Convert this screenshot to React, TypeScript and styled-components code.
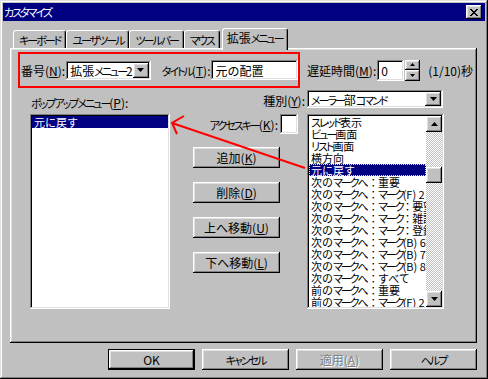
import styled, { createGlobalStyle, css } from "styled-components";

const GlobalStyle = createGlobalStyle`
  html, body {
    margin: 0;
    padding: 0;
    background: #c0c0c0;
  }
  body {
    font-family: "Noto Sans CJK JP", "Noto Sans", sans-serif;
    font-size: 12px;
    color: #000;
  }
  * {
    box-sizing: border-box;
  }
`;

const raised = css`
  box-shadow:
    inset -1px -1px #000,
    inset 1px 1px #fff,
    inset -2px -2px #808080,
    inset 2px 2px #dfdfdf;
`;

const sunken = css`
  box-shadow:
    inset -1px -1px #fff,
    inset 1px 1px #808080,
    inset -2px -2px #dfdfdf,
    inset 2px 2px #000;
`;

// katakana in the old UI font is set much narrower than kanji
const SKana = styled.span`
  font-size: 11px;
  font-feature-settings: "palt" 1;
  letter-spacing: -2px;
`;

const SColon = styled.span`
  font-feature-settings: "palt" 1;
  padding: 0 2px;
`;

function J({ t }: { t: string }) {
  const parts = t.split(/([\u30A0-\u30FF]+|：)/);
  return (
    <>
      {parts.map((p, i) =>
        i % 2 === 0 ? (
          p
        ) : p === "：" ? (
          <SColon key={i}>{p}</SColon>
        ) : (
          <SKana key={i}>{p}</SKana>
        )
      )}
    </>
  );
}

const SWindow = styled.div`
  position: relative;
  width: 488px;
  height: 379px;
  padding: 3px;
  background: #c0c0c0;
  display: flex;
  flex-direction: column;
  box-shadow:
    inset -1px -1px #000,
    inset 1px 1px #dfdfdf,
    inset -2px -2px #808080,
    inset 2px 2px #fff;
`;

const STitleBar = styled.div`
  height: 18px;
  flex: 0 0 18px;
  background: #000080;
  color: #fff;
  display: flex;
  align-items: center;
  justify-content: space-between;
  padding: 0 3px 0 1px;
  line-height: 1;
`;

const SCloseButton = styled.div`
  width: 16px;
  height: 14px;
  background: #c0c0c0;
  display: grid;
  place-items: center;
  ${raised};
`;

const SBody = styled.div`
  flex: 1;
  display: flex;
  flex-direction: column;
  padding: 7px 8px 0 7px;
`;

const STabStrip = styled.div`
  display: flex;
  align-items: flex-end;
  height: 20px;
  padding-left: 3px;
  position: relative;
  z-index: 1;
`;

const STab = styled.div<{ $active?: boolean }>`
  height: 18px;
  padding: 1px 5px 0;
  display: flex;
  align-items: center;
  white-space: nowrap;
  background: #c0c0c0;
  border-top: 1px solid #fff;
  border-left: 1px solid #fff;
  border-right: 1px solid #000;
  border-radius: 3px 3px 0 0;
  box-shadow: inset -1px 0 #808080;

  ${(p) =>
    p.$active &&
    css`
      height: 22px;
      margin: 0 -2px -2px 2px;
      padding: 0 4px 4px;
      position: relative;
      z-index: 2;
    `}
`;

const SPanel = styled.div`
  flex: 0 0 295px;
  background: #c0c0c0;
  padding: 4px 2px 2px;
  ${raised};
`;

const STopRow = styled.div`
  display: flex;
  align-items: center;
  padding-left: 6px;
`;

const SRedBox = styled.div`
  width: 282px;
  height: 36px;
  border: 2px solid #ff0000;
  display: flex;
  align-items: center;
`;

const SLabel = styled.span<{ $gap?: number }>`
  white-space: nowrap;
  margin-left: ${(p) => p.$gap ?? 0}px;
`;

const SField = styled.div<{ $w: number; $h: number; $gap?: number }>`
  width: ${(p) => p.$w}px;
  height: ${(p) => p.$h}px;
  margin-left: ${(p) => p.$gap ?? 0}px;
  background: #fff;
  padding: 2px 2px 2px 4px;
  display: flex;
  align-items: center;
  white-space: nowrap;
  overflow: hidden;
  ${sunken};
`;

const SFieldText = styled.span`
  flex: 1;
  overflow: hidden;
`;

const SArrowButton = styled.div<{ $h?: number }>`
  width: 16px;
  height: ${(p) => p.$h ?? 15}px;
  flex: 0 0 auto;
  background: #c0c0c0;
  display: grid;
  place-items: center;
  ${raised};
`;

const SSpinner = styled.div`
  width: 15px;
  height: 21px;
  margin-left: 1px;
  display: flex;
  flex-direction: column;
`;

const SSpinButton = styled.div`
  flex: 1;
  background: #c0c0c0;
  display: grid;
  place-items: center;
  ${raised};
`;

const SGrid = styled.div`
  display: grid;
  grid-template-columns: 140px 137px 137px;
  grid-template-rows: 21px 195px;
  row-gap: 3px;
  margin: 2px 0 0 18px;
`;

const SPopupLabel = styled.span`
  align-self: end;
  padding-left: 1px;
  white-space: nowrap;
`;

const SKindLabel = styled.span`
  justify-self: end;
  align-self: center;
  padding-right: 2px;
  white-space: nowrap;
`;

const SListBox = styled.div`
  background: #fff;
  padding: 2px;
  display: flex;
  overflow: hidden;
  ${sunken};
`;

const SItems = styled.div`
  flex: 1;
  min-width: 0;
  overflow: hidden;
`;

const SItem = styled.div<{ $selected?: boolean; $focused?: boolean }>`
  height: 12px;
  line-height: 12px;
  padding-left: 2px;
  font-size: 11px;
  white-space: nowrap;

  ${(p) =>
    p.$selected &&
    css`
      background: #000080;
      color: #fff;
    `}
  ${(p) =>
    p.$focused &&
    css`
      outline: 1px dotted #ffff00;
      outline-offset: -1px;
    `}
`;

const SScrollBar = styled.div`
  width: 16px;
  flex: 0 0 16px;
  display: flex;
  flex-direction: column;
`;

const STrack = styled.div`
  flex: 1;
  background: repeating-conic-gradient(#c0c0c0 0 25%, #fff 0 50%) 0 0 / 2px
    2px;
`;

const SThumb = styled.div<{ $offset: number }>`
  width: 16px;
  height: 16px;
  margin-top: ${(p) => p.$offset}px;
  background: #c0c0c0;
  ${raised};
`;

const SMiddle = styled.div`
  display: flex;
  flex-direction: column;
`;

const SAccessRow = styled.div`
  display: flex;
  align-items: center;
  justify-content: flex-end;
  padding-right: 9px;
`;

const SButtonStack = styled.div`
  display: flex;
  flex-direction: column;
  gap: 14px;
  margin: 13px 0 0 23px;
`;

const SButton = styled.div<{ $default?: boolean; $disabled?: boolean }>`
  width: 87px;
  height: 21px;
  background: #c0c0c0;
  display: flex;
  align-items: center;
  justify-content: center;
  white-space: nowrap;
  ${raised};

  ${(p) =>
    p.$default &&
    css`
      box-shadow:
        inset 0 0 0 1px #000,
        inset -2px -2px #000,
        inset 2px 2px #fff,
        inset -3px -3px #808080,
        inset 3px 3px #dfdfdf;
    `}
  ${(p) =>
    p.$disabled &&
    css`
      color: #808080;
      text-shadow: 1px 1px 0 #fff;
    `}
`;

const SFooter = styled.div`
  display: flex;
  justify-content: flex-end;
  gap: 7px;
  margin-top: 6px;
`;

const SOverlay = styled.svg`
  position: absolute;
  left: 0;
  top: 0;
  pointer-events: none;
`;

function Tri({ up }: { up?: boolean }) {
  return (
    <svg width="7" height="4" viewBox="0 0 7 4">
      <path d={up ? "M3.5 0L7 4H0Z" : "M0 0H7L3.5 4Z"} fill="#000" />
    </svg>
  );
}

function SmallTri({ up }: { up?: boolean }) {
  return (
    <svg width="5" height="3" viewBox="0 0 5 3">
      <path d={up ? "M2.5 0L5 3H0Z" : "M0 0H5L2.5 3Z"} fill="#000" />
    </svg>
  );
}

function Key({ k }: { k: string }) {
  return (
    <>
      (<u>{k}</u>)
    </>
  );
}

const rightItems = [
  "スレッド表示",
  "ビュー画面",
  "リスト画面",
  "横方向",
  "元に戻す",
  "次のマークへ：重要",
  "次のマークへ：マーク(F) 2",
  "次のマークへ：マーク：要望",
  "次のマークへ：マーク：雑談",
  "次のマークへ：マーク：登録",
  "次のマークへ：マーク(B) 6",
  "次のマークへ：マーク(B) 7",
  "次のマークへ：マーク(B) 8",
  "次のマークへ：すべて",
  "前のマークへ：重要",
  "前のマークへ：マーク(F) 2",
];

export default function App() {
  return (
    <>
      <GlobalStyle />
      <SWindow>
        <STitleBar>
          <span>
            <J t="カスタマイズ" />
          </span>
          <SCloseButton>
            <svg width="8" height="7" viewBox="0 0 8 7">
              <path
                d="M0 0h2v1h1v1h2V1h1V0h2v1H7v1H6v1H5v1h1v1h1v1h1v1H6V6H5V5H3v1H2v1H0V6h1V5h1V4h1V3H2V2H1V1H0Z"
                fill="#000"
              />
            </svg>
          </SCloseButton>
        </STitleBar>

        <SBody>
          <STabStrip>
            <STab>
              <J t="キーボード" />
            </STab>
            <STab>
              <J t="ユーザツール" />
            </STab>
            <STab>
              <J t="ツールバー" />
            </STab>
            <STab>
              <J t="マウス" />
            </STab>
            <STab $active>
              <J t="拡張メニュー" />
            </STab>
          </STabStrip>

          <SPanel>
            <STopRow>
              <SRedBox>
                <SLabel $gap={1}>
                  番号<Key k="N" />:
                </SLabel>
                <SField $w={86} $h={19} $gap={1}>
                  <SFieldText>
                    <J t="拡張メニュー2" />
                  </SFieldText>
                  <SArrowButton>
                    <Tri />
                  </SArrowButton>
                </SField>
                <SLabel $gap={11}>
                  <J t="タイトル" />
                  <Key k="T" />:
                </SLabel>
                <SField $w={88} $h={20} $gap={1}>
                  <SFieldText>元の配置</SFieldText>
                </SField>
              </SRedBox>
              <SLabel $gap={7}>
                遅延時間<Key k="M" />:
              </SLabel>
              <SField $w={27} $h={21} $gap={1}>
                <SFieldText>0</SFieldText>
              </SField>
              <SSpinner>
                <SSpinButton>
                  <SmallTri up />
                </SSpinButton>
                <SSpinButton>
                  <SmallTri />
                </SSpinButton>
              </SSpinner>
              <SLabel $gap={8}>(1/10)秒</SLabel>
            </STopRow>

            <SGrid>
              <SPopupLabel>
                <J t="ポップアップメニュー" />
                <Key k="P" />:
              </SPopupLabel>
              <SKindLabel>
                種別<Key k="Y" />:
              </SKindLabel>
              <SField $w={136} $h={18}>
                <SFieldText>
                  <J t="メーラー部コマンド" />
                </SFieldText>
                <SArrowButton $h={14}>
                  <Tri />
                </SArrowButton>
              </SField>

              <SListBox>
                <SItems>
                  <SItem $selected>元に戻す</SItem>
                </SItems>
              </SListBox>

              <SMiddle>
                <SAccessRow>
                  <SLabel>
                    <J t="アクセスキー" />
                    <Key k="K" />:
                  </SLabel>
                  <SField $w={18} $h={20} $gap={2} />
                </SAccessRow>
                <SButtonStack>
                  <SButton>
                    追加<Key k="K" />
                  </SButton>
                  <SButton>
                    削除<Key k="D" />
                  </SButton>
                  <SButton>
                    上へ移動<Key k="U" />
                  </SButton>
                  <SButton>
                    下へ移動<Key k="L" />
                  </SButton>
                </SButtonStack>
              </SMiddle>

              <SListBox>
                <SItems>
                  {rightItems.map((t, i) => (
                    <SItem key={i} $selected={i === 4} $focused={i === 4}>
                      <J t={t} />
                    </SItem>
                  ))}
                </SItems>
                <SScrollBar>
                  <SArrowButton $h={16}>
                    <Tri up />
                  </SArrowButton>
                  <STrack>
                    <SThumb $offset={35} />
                  </STrack>
                  <SArrowButton $h={16}>
                    <Tri />
                  </SArrowButton>
                </SScrollBar>
              </SListBox>
            </SGrid>
          </SPanel>

          <SFooter>
            <SButton $default>OK</SButton>
            <SButton>
              <J t="キャンセル" />
            </SButton>
            <SButton $disabled>
              適用<Key k="A" />
            </SButton>
            <SButton>
              <J t="ヘルプ" />
            </SButton>
          </SFooter>
        </SBody>

        <SOverlay width="488" height="379" viewBox="0 0 488 379">
          <path
            d="M305 168L172 123M184 116L172 123L177 134"
            stroke="#ff0000"
            strokeWidth="2"
            fill="none"
          />
        </SOverlay>
      </SWindow>
    </>
  );
}
